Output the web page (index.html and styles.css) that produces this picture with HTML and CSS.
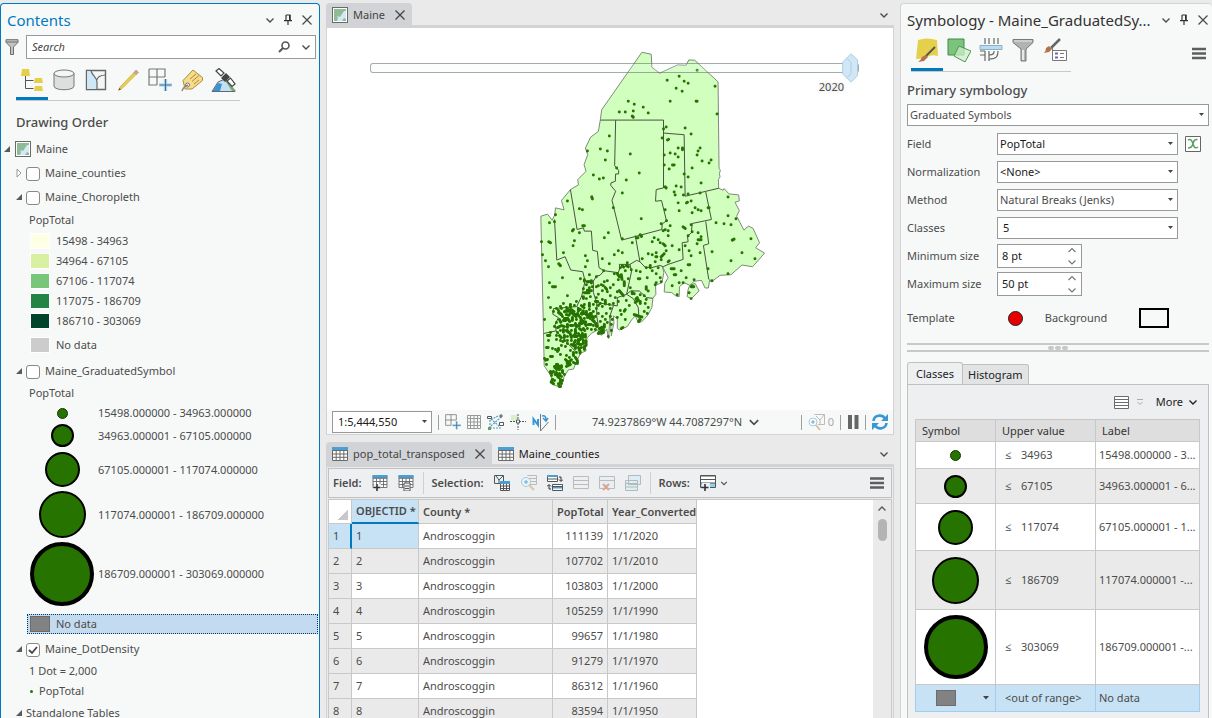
FILE: index.html
```html
<!DOCTYPE html>
<html lang="en">
<head>
<meta charset="utf-8">
<title>Maine - Population</title>
<link rel="stylesheet" href="styles.css">
</head>
<body>
<svg class="defs" width="0" height="0" aria-hidden="true">
  <symbol id="chev" viewBox="0 0 10 10"><path d="M1.500 3.500 5 7 8.500 3.500" fill="none" stroke="currentColor" stroke-width="1.400"/></symbol>
  <symbol id="pin" viewBox="0 0 10 12"><path d="M3 1h4v5.500M3 1v5.500M1 6.700h8M5 7v4" fill="none" stroke="#333" stroke-width="1.200"/><path d="M6 1h1.500v5.500H6z" fill="#333"/></symbol>
  <symbol id="close" viewBox="0 0 12 12"><path d="M1.500 1.500l9 9M10.500 1.500l-9 9" fill="none" stroke="currentColor" stroke-width="1.300"/></symbol>
  <symbol id="mapicon" viewBox="0 0 16 16"><rect x=".5" y=".5" width="15" height="15" fill="#fff" stroke="#6a6a6a"/><path d="M2 2h12v12H2z" fill="#8fbc94"/><path d="M14 4v8l-2-1-2 3H5l1-3-1-2 3 1 2-3 2-3z" fill="#d3e9f6"/></symbol>
  <symbol id="open" viewBox="0 0 8 8"><path d="M7 1v6H1z" fill="#5a5a5a"/></symbol>
  <symbol id="shut" viewBox="0 0 8 10"><path d="M2 1v8L6 5z" fill="#fff" stroke="#999"/></symbol>
  <symbol id="tbl" viewBox="0 0 16 14"><path d="M.5.500h15v13H.5z" fill="#fff" stroke="#6a6a6a"/><path d="M0 0h16v3.500H0z" fill="#4a9fd4"/><path d="M.5 3.500h15M.5 7h15M.5 10.300h15M4.200 3.500v10M8 3.500v10M11.800 3.500v10" stroke="#6a6a6a" fill="none"/></symbol>
  <symbol id="gridplus" viewBox="0 0 24 24"><path d="M1 1h16v8M1 1v16h8M9 1v16M1 9h16" fill="none" stroke="#777" stroke-width="1.200"/><path d="M17.500 11v12M11 17h13" stroke="#b5ddf5" stroke-width="3.500"/><path d="M17.500 11v12M11.500 17h12" stroke="#3f6f96" stroke-width="1.200"/></symbol>
  <symbol id="burger" viewBox="0 0 14 12"><path d="M0 1.500h14M0 6h14M0 10.500h14" stroke="#5e5e5e" stroke-width="2.600"/></symbol>
</svg>
<div class="app">

<aside class="contents">
  <header class="pane-head">
    <h1 class="pane-title blue">Contents</h1>
    <button aria-label="Options"><svg width="10" height="10"><use href="#chev"/></svg></button>
    <button aria-label="Pin"><svg width="10" height="12"><use href="#pin"/></svg></button>
    <button aria-label="Close"><svg width="12" height="12"><use href="#close"/></svg></button>
  </header>
  <div class="search-row">
    <svg width="14" height="16" viewBox="0 0 14 16"><path d="M1 .7h12v2.600L8.500 8v7.500h-3V8L1 3.300z" fill="#c3c3c3" stroke="#6f6f6f"/><path d="M1 3h12" stroke="#6f6f6f"/></svg>
    <div class="search-box">
      <input type="text" placeholder="Search" aria-label="Search">
      <button aria-label="Find"><svg width="12" height="12" viewBox="0 0 12 12"><circle cx="7.500" cy="4.500" r="3.500" fill="none" stroke="#555" stroke-width="1.600"/><path d="M5 7 1 11" stroke="#555" stroke-width="2"/></svg></button>
      <button aria-label="Search options"><svg width="10" height="10"><use href="#chev"/></svg></button>
    </div>
  </div>
  <nav class="views">
    <button class="on" aria-label="Drawing order"><svg width="24" height="24" viewBox="0 0 24 24"><path d="M2 1h7l1 7H1zM15 10h7l1 5h-9zM15 18h7l1 5h-9z" fill="#e5cf4a"/><path d="M5.500 8v12.500h8M5.500 12.500h8" fill="none" stroke="#555"/></svg></button>
    <button aria-label="Data source"><svg width="24" height="24" viewBox="0 0 24 24"><path d="M2 5v13c0 5 20 5 20 0V5" fill="#dedede" stroke="#777"/><ellipse cx="12" cy="5.500" rx="10" ry="3.500" fill="#f5f5f5" stroke="#777"/></svg></button>
    <button aria-label="Selection"><svg width="24" height="24" viewBox="0 0 24 24"><path d="M2.500 2.500h19v19h-19z" fill="#f4f5f5" stroke="#666" stroke-width="1.400"/><path d="M3 3h4l6 9v9H3z" fill="#cfe8f8"/><path d="M7 3c2 6 6 6 6 11v7M12.500 13c1-5 5-6 9-6" fill="none" stroke="#666" stroke-width="1.200"/></svg></button>
    <button aria-label="Editing"><svg width="24" height="24" viewBox="0 0 24 24"><path d="M3 22l1-3L18 4.500l2 2L6 20.500z" fill="#e7cf4f" stroke="#c9ac3c" stroke-width=".8"/><path d="M18 4.500l2-2.500 2.500 2.500-2.500 2z" fill="#e79b91" stroke="#999" stroke-width=".8"/><path d="M2 22.500l1.500-2.500 1.500 1.500z" fill="#555"/></svg></button>
    <button aria-label="Snapping"><svg width="24" height="24"><use href="#gridplus"/></svg></button>
    <button aria-label="Labeling"><svg width="24" height="24" viewBox="0 0 24 24"><path d="M3 12.500 13 2l9.500 7.500v3L12 21H5z" fill="#f5dc8a" stroke="#b08b3a"/><path d="M10 11l6-5M12 13.500l7-6M14 16l5-4" stroke="#b08b3a" fill="none"/><circle cx="7.500" cy="17" r="2" fill="#fff" stroke="#777"/><path d="M8 17c-3 1-5 3-6 6" fill="none" stroke="#888" stroke-width="1.500"/></svg></button>
    <button aria-label="Perspective imagery"><svg width="26" height="24" viewBox="0 0 26 24"><path d="M1 23.500 7 14l7-3 10 12.500z" fill="#bfe0f5" stroke="#666"/><path d="M1.500 23l5.500-8 4 1-2 7z" fill="#3c93d0"/><path d="M13 11l8 12h4l-5-6z" fill="#7aaa72"/><path d="M5 3l3-2.500 5 4.500-3 3zM16 13l3.500-3 4.500 6-3 2.500z" fill="#fff" stroke="#444" stroke-width="1.200"/><path d="M10 10l5-5 4 4-5 5z" fill="#444"/></svg></button>
  </nav>
  <h2 class="section">Drawing Order</h2>
  <ul class="tree">
    <li class="row l0"><button aria-label="Collapse"><svg width="8" height="8"><use href="#open"/></svg></button><svg width="16" height="16"><use href="#mapicon"/></svg><span>Maine</span></li>
    <li class="row l1"><button aria-label="Expand"><svg width="8" height="10"><use href="#shut"/></svg></button><input type="checkbox" id="c1"><label for="c1">Maine_counties</label></li>
    <li class="row l1"><button aria-label="Collapse"><svg width="8" height="8"><use href="#open"/></svg></button><input type="checkbox" id="c2"><label for="c2">Maine_Choropleth</label></li>
    <li class="row heading">PopTotal</li>
    <li class="row cls"><i class="swatch y1"></i>15498 - 34963</li>
    <li class="row cls"><i class="swatch y2"></i>34964 - 67105</li>
    <li class="row cls"><i class="swatch y3"></i>67106 - 117074</li>
    <li class="row cls"><i class="swatch y4"></i>117075 - 186709</li>
    <li class="row cls"><i class="swatch y5"></i>186710 - 303069</li>
    <li class="row cls nodata"><i class="swatch y6"></i>No data</li>
    <li class="row l1"><button aria-label="Collapse"><svg width="8" height="8"><use href="#open"/></svg></button><input type="checkbox" id="c3"><label for="c3">Maine_GraduatedSymbol</label></li>
    <li class="row heading low">PopTotal</li>
    <li class="row sym"><span class="slot"><i class="dot d1"></i></span>15498.000000 - 34963.000000</li>
    <li class="row sym"><span class="slot"><i class="dot d2"></i></span>34963.000001 - 67105.000000</li>
    <li class="row sym"><span class="slot"><i class="dot d3"></i></span>67105.000001 - 117074.000000</li>
    <li class="row sym"><span class="slot"><i class="dot d4"></i></span>117074.000001 - 186709.000000</li>
    <li class="row sym"><span class="slot"><i class="dot d5"></i></span>186709.000001 - 303069.000000</li>
    <li class="row chosen"><i class="grey"></i>No data</li>
    <li class="row l1"><button aria-label="Collapse"><svg width="8" height="8"><use href="#open"/></svg></button><input type="checkbox" id="c4" checked><label for="c4">Maine_DotDensity</label></li>
    <li class="row heading low">1 Dot = 2,000</li>
    <li class="row heading low"><i class="speck"></i>PopTotal</li>
    <li class="row l1"><button aria-label="Collapse"><svg width="8" height="8"><use href="#open"/></svg></button><span>Standalone Tables</span></li>
  </ul>
</aside>

<main class="centre">
  <section class="mapview">
    <div class="tabs">
      <div class="tab active"><svg width="16" height="16"><use href="#mapicon"/></svg><span>Maine</span><button aria-label="Close Maine"><svg width="12" height="12"><use href="#close"/></svg></button></div>
      <button class="more" aria-label="Tab list"><svg width="10" height="10"><use href="#chev"/></svg></button>
    </div>
    <div class="map">
      <svg class="state" viewBox="0 0 566 383" aria-label="Map of Maine">
        <g transform="translate(203 12) scale(.33333)" fill="none" stroke="#66755f" stroke-width="3" stroke-linejoin="round">
          <path fill="#d1ffbe" stroke="#808a7a" d="M336 37 364 43 366 82 389 100 443 75 469 76 477 60 495 61 565 126 568 386 572 392 569 402 571 412 566 420 567 446 580 452 583 447 598 463 627 466 629 484 616 488 629 513 621 530 643 572 656 560 670 566 690 610 678 625 705 641 669 682 637 677 604 706 571 708 544 728 540 720 536 746 526 746 515 723 493 726 480 738 463 730 449 742 448 772 438 770 426 760 403 758 405 732 415 715 403 692 398 682 402 700 396 730 377 738 378 765 369 777 366 805 352 830 335 848 325 850 316 830 305 842 292 862 268 872 262 868 262 838 250 830 252 850 244 890 240 830 236 898 230 870 215 888 206 884 204 872 185 882 172 895 165 915 168 935 152 942 140 965 130 990 115 992 103 1010 92 1046 68 1036 62 1010 42 980 40 880 32 530 52 524 66 542 74 526 76 505 102 511 94 483 121 450 145 436 143 420 168 395 162 375 173 345 166 325 182 292 205 275 211 240 215 210Z"/>
          <path fill="#d1ffbe" stroke="#808a7a" d="M480 738 496 732 508 755 485 778 472 772 475 750Z"/>
          <path stroke="#47523f" d="M211 241H401V445L379 450 377 485 395 483 410 544 397 553 396 570 275 602 246 482 257 455 242 437 243 430 256 425 257 403 266 403 266 392 254 378 257 241M401 280 463 285 466 470 567 446M528 457 545 540 487 552 485 580 473 590 475 607 457 610 460 660 415 675 400 682M528 546 537 613 521 618 537 720M121 450 141 570 160 565 163 575 184 575 188 633 202 636 207 685 222 694 265 700 270 685 268 675 300 675 320 663 330 667 316 588M330 667 345 683 365 685 390 678 400 682M73 540 80 662 105 652 122 692 158 697 165 725 190 725 200 710 210 708 222 694M165 725 155 770 140 802 70 808 68 825 85 835 75 855 78 875 40 883M190 725 190 760 200 790 262 800 262 775 290 765 305 695 300 675M290 765 302 755 328 755 350 775 369 777M290 765 310 778 325 805 328 845M200 790 200 830 205 860M240 830 250 800M140 802 180 840 200 860M78 875 110 910 140 940"/>
        </g>
        <g transform="translate(203 12) scale(.33333)" fill="none" stroke="#267300" stroke-width="9" stroke-linecap="round">
          <path d="M502 91h0M448 109h0M412 121h0M463 124h0M475 130h0M556 139h0M439 145h0M457 154h0M421 184h0M499 184h3M295 184h0M313 193h0M340 202h0M268 217h0M286 217h0M310 214h0M355 220h0M307 229l3 3M562 223h0M409 262h0M401 268h0M466 265h0M484 283h0M397 295h0M413 301l3-2M238 289h0M211 328h0M232 334h0M172 334h0M226 361h0M301 343h0M445 325h0M458 325v5M511 325h0M505 334h0M502 346h0M421 340h0M436 343h0M403 346h0M445 352h0M517 364h0M544 361h0M538 370h0M403 376h0M428 376h5M418 388h0M487 385h0M463 403h0M475 412h0M328 400h0M289 421h0M260 385h0M190 406h0M208 418h0M220 415h0M514 430h0M439 439h0M454 442h0M406 442l3 3M433 457h0M436 466h0M475 463h0M461 466h0M511 460h0M277 460h0M595 472h0M185 472l2 6M112 484h0M148 508h0M157 511h0M76 526h0M445 490h0M470 490l3-2M484 484h0M406 511h0M448 514h0M487 520h0M496 505h0M505 511h0M514 514h0M535 505h3M250 505h0"/>
          <g transform="translate(0 480)">
            <path d="M595 49h0M334 58h0M619 58h0M559 70h0M583 73h0M604 76h0M608 122l5-3M664 118h0M547 157h0M637 160h0M604 184h0M676 178h0M595 223h0M58 70h0M73 67h0M130 90l-3 4M158 79h5M148 100h0M133 124h0M129 139h0M100 160h0M34 127h0M56 127l5 3M37 166h0M46 184h0M55 202h0M86 193l5 6M97 235h0M58 250h0M67 262h9M112 289h0M55 295h0M151 238h0M166 169h0M172 184h0M166 202h0M235 100h0M223 115h0M277 118h0M307 130h0M319 115h5M331 106l4 5M265 154h0M277 160h0M253 166h0M217 178h0M238 193h0M221 214h0M178 226h0M199 232h0M337 178h0M373 115h0M385 121h0M367 127h0M391 130h0M400 133l6 6M406 91h0M400 94h0M394 73h0M410 64h0M421 79h0M415 94h0M415 109h0M427 139h0M448 151h0M466 139h0M478 154h0M355 163h0M367 166h0M378 172h3M379 160h0M409 154h0M400 166l-6 6M403 163h0M394 181h0M415 187l3-3M460 82l6 5M484 76h0M487 97h0M475 109h0M505 100h0M505 121h9M514 112h0M502 133h0M511 160h0M475 196h5M484 169h0M424 208h9M454 214h0M433 226h5M427 259h0M460 250h0M448 250h0M469 235h0M493 241h0M488 260h0M478 280h0M484 298h0M484 262h8M442 286h0M535 208h0M547 244h0"/>
            <path d="M361 198v7M349 205h0M385 205h0M367 214h0M376 187h0M379 223h0M391 235h0M394 247h0M379 250h0M376 256h0M352 235h0M325 238h5M331 217h0M319 214h0M304 211h0M289 199l6 3M277 199l4 4M292 190h0M286 214h0M271 205h0M262 223l6 9M274 226l2 14M265 241h0M253 223h0M250 256h0M283 247v12M295 238h0M349 262v8M355 275h0M343 289h0M349 301h0M331 286h0M346 313h0M355 325h0M343 337h0M322 295l-4 4M325 301l-4 5M316 310h0M331 307v6M307 278v5M313 283h0M301 265h0M280 289h0M268 274l10 12M262 277h0M256 295h0M241 289h0M232 277h0M226 265l4 5M220 259h0M217 274h0M214 256h0M205 259h0M232 244h0M223 247h0M241 265h0M265 307h0M289 304h0M298 319h0M286 331l-3 5M271 334h0M274 346h0M286 361h0M313 346l10 3M322 350l14 3M331 361l-5 6M352 343h0M250 313h0M238 316h0M241 328h0M226 304v10M217 301h0M211 313h0M199 295h0M196 307h7M205 319h0M217 322h0M229 343v0M241 352h0M247 361h0M226 361h0M217 352h0M205 343h0M211 367h0M202 382h0M223 376v8M214 394v8M235 412h0M244 394h0M262 355h0M274 388l5-3M244 376h0"/>
            <path d="M163 241v5M172 247h5M184 244v7M169 256h0M187 262h0M160 268h0M178 265h0M163 280h14M172 273h6M199 262h0M205 285h0M184 274h0M160 292v6M169 298h0M181 292h0M178 312v10M190 316h0M199 328h0M154 319l8 6M163 316h0M145 328v8M151 331h0M139 307h0M133 319h0M121 316v8M109 325h0M100 313h0M91 322h0M94 328h0M79 328h0M70 337h0M61 325h0M85 334h0M88 340l6 6M103 337l12-6M124 331l8 6M121 343h0M97 352h0M109 346l8 2M130 346h8M142 343l5 8M154 343h8M169 337v9M178 331h0M181 343v9M190 337h0M196 352h0M187 361l6 6M172 355h0M163 358h0M151 355l4 8M139 361h0M127 355v9M115 361l4 6M100 364h7M88 361l4 8M79 370h0M73 382h0M82 385l6-3M94 379l9 3M112 376v9M121 379h7M136 373l3 10M148 373h8M163 370l5 9M175 376h8M190 379h0M199 373v8M184 391h0M172 388h0M160 388l4 6M148 388l6 5M136 391v8M124 394h0M112 394l3 5M100 391v8M91 394h0M82 400h0M79 409h0M88 409l5 6M103 409v6M112 412h0M121 406l3 9M133 412h8M145 403l6 9M157 403v9M166 406v8M160 424v9M154 436h0M145 421v9M136 424l-4 8M124 424h0M112 424h0M103 424l-5 3M91 424h0M79 421h0M94 439h0M112 433h0M106 442h0M124 436l8 4M136 439v9M145 445l4 9M154 445h0M163 442v9M43 361h0M52 409h7M61 400h0M55 424h0M49 445h5M67 448h0M76 451h0M85 448v5M91 466h0M61 472h6M52 481l-6 2M43 478h0M49 496h0M82 457h0"/>
            <path d="M150 457v5M139 460h0M130 460v9M121 454h0M109 469h0M106 481l6 6M118 475h0M118 487l6-5M121 496l-8 4M136 475l6 9M142 487v6M130 490h0M136 493h0M109 502h0M79 496h0M73 502l6 3M82 496l4 6M94 500v5M88 508v4M79 511h0M70 517l-6 5M79 520l-4 6M88 523v6M97 514v6M103 526h0M94 532v0M85 535l-4-6M67 541l-4 8M73 544h0M64 529h0M70 554l-4-3M91 541v8M97 544h0M94 553h0M91 562h0M88 562l-3-8M82 526l8 1M61 517v5M111 493h8M82 510l-8-5M196 391h0M205 403l4-5M220 391v10M232 370h0M208 388l9-4M93 346l-8-6M103 358h10M126 340l12 12M160 335l-5 10M170 345l10 12M138 402l-8 8M168 425v14M158 415l-8 6M120 402l-12-8M148 380l-12-2M174 348l10-6M108 336l12 0M142 433l8 3M152 365l15 3M186 350l4 6"/>
          </g>
        </g>
      </svg>
      <div class="time">
        <input type="range" min="1900" max="2020" value="2020" aria-label="Year">
        <output>2020</output>
      </div>
    </div>
    <footer class="status">
      <select class="combo scale" aria-label="Scale"><option>1:5,444,550</option></select>
      <i class="vr"></i>
      <button aria-label="Snap"><svg width="16" height="16"><use href="#gridplus"/></svg></button>
      <button aria-label="Grid"><svg width="14" height="14" viewBox="0 0 14 14"><path d="M.5.500h13v13H.5zM.5 3.500h13M.5 7h13M.5 10.500h13M3.500.5v13M7 .5v13M10.500.5v13" fill="none" stroke="#999"/></svg></button>
      <button aria-label="Dynamic constraints"><svg width="17" height="16" viewBox="0 0 17 16"><path d="M3 14V6l8-4M3 14h11M4 12 14 3M4 5l9 8" fill="none" stroke="#5a9bc4" stroke-width="1.200" stroke-dasharray="2 1"/><path d="M.5 2.500h4v2h-4zM12.500 8.500h4v3h-4z" fill="#fff" stroke="#555"/><path d="M1 13h3v3H1z" fill="#63a163"/><path d="M12 2h4M14 0v4" stroke="#555"/></svg></button>
      <button aria-label="Inference"><svg width="16" height="16" viewBox="0 0 16 16"><path d="M1 1h7v6H1z" fill="#d9efcf"/><path d="M8 0v16M0 7.500h16" stroke="#555" stroke-dasharray="2 1"/><path d="M6.500 6h3v3h-3z" fill="#fff" stroke="#555"/></svg></button>
      <button aria-label="Correct to north"><svg width="17" height="17" viewBox="0 0 17 17"><path d="M1.500 11V5l4.500 6V5" fill="none" stroke="#3b97d3" stroke-width="2"/><path d="M8.500 0v17l8-9" fill="none" stroke="#777"/><path d="M10 2c3-1 4 1 4 4M11 4l3 3 2-3" fill="none" stroke="#3b97d3" stroke-width="1.500"/></svg></button>
      <i class="vr"></i>
      <span class="coords">74.9237869°W 44.7087297°N</span>
      <button aria-label="Coordinate units"><svg width="12" height="12"><use href="#chev"/></svg></button>
      <span class="push"></span>
      <i class="vr"></i>
      <button class="count" aria-label="Selected features"><svg width="17" height="17" viewBox="0 0 17 17"><path d="M6.500.5h10v10H10M8 2l4 4v4M12 6l4-5" fill="none" stroke="#bbb"/><circle cx="5" cy="8" r="4" fill="#fff" stroke="#a5cbe3"/><path d="M3 8h4M5 6v4" stroke="#6aabd6"/><path d="M8 11l4 5" stroke="#dfc09e" stroke-width="2"/></svg><span>0</span></button>
      <i class="vr"></i>
      <button aria-label="Pause drawing"><svg width="12" height="14" viewBox="0 0 12 14"><path d="M1 0h4v14H1zM7.500 0h4v14h-4z" fill="#666"/></svg></button>
      <i class="vr"></i>
      <button aria-label="Refresh"><svg width="16" height="16" viewBox="0 0 16 16"><path d="M1.500 7C2 1 10 0 13 4.500M14.500 9C14 15 6 16 3 11.500" fill="none" stroke="#3b97d3" stroke-width="2.600"/><path d="M16 0v7H9zM0 16V9h7z" fill="#3b97d3"/></svg></button>
    </footer>
  </section>

  <section class="tableview">
    <div class="tabs">
      <div class="tab active"><svg width="16" height="14"><use href="#tbl"/></svg><span>pop_total_transposed</span><button aria-label="Close table"><svg width="12" height="12"><use href="#close"/></svg></button></div>
      <div class="tab"><svg width="16" height="14"><use href="#tbl"/></svg><span>Maine_counties</span></div>
      <button class="more" aria-label="Tab list"><svg width="10" height="10"><use href="#chev"/></svg></button>
    </div>
    <div class="tableframe">
      <div class="tools">
        <b>Field:</b>
        <button aria-label="Add field"><svg width="16" height="16" viewBox="0 0 16 16"><use href="#tbl" width="16" height="13"/><path d="M2 9h7v7H2z" fill="#eeeff1"/><path d="M5 9v7M1.500 12.500h7" stroke="#333" stroke-width="1.600"/></svg></button>
        <button aria-label="Calculate field"><svg width="16" height="16" viewBox="0 0 16 16"><use href="#tbl" width="16" height="13"/><path d="M6 8h6v8H6z" fill="#eeeff1" stroke="#555"/><path d="M7 11h4M7 13.500h4" stroke="#555"/></svg></button>
        <i class="vr light"></i>
        <b>Selection:</b>
        <button aria-label="Select by attributes"><svg width="16" height="16" viewBox="0 0 16 16"><path d="M.5.500h9v8h-9zM2 1l3 4v3M5 5l4-4" fill="#e2f2fb" stroke="#555"/><path d="M6.500 6.500h9v9h-9z" fill="#fff" stroke="#555"/><path d="M6 6h10v3H6z" fill="#4a9fd4"/><path d="M7 11h9M7 13.500h9M9.500 9v7M12.500 9v7" stroke="#555"/></svg></button>
        <button aria-label="Zoom to selection"><svg width="17" height="16" viewBox="0 0 17 16"><path d="M7.500.5h9v9h-7M8 3.500h8M10 6.500h6" fill="none" stroke="#bbb"/><circle cx="6" cy="7" r="4.500" fill="#e9f3fa" stroke="#a9cbe0"/><path d="M4 7h4M6 5v4" stroke="#6aabd6"/><path d="M9 10l5 5" stroke="#dfc3aa" stroke-width="2"/></svg></button>
        <button aria-label="Switch selection"><svg width="16" height="16" viewBox="0 0 16 16"><path d="M.5.500h10v6H.5zM5.500 9.500h10v6h-10z" fill="#fff" stroke="#555"/><path d="M0 0h11v2H0zM6 12h9v1.500H6z" fill="#4a9fd4"/><path d="M1 4h10M6 11.500h10" stroke="#555"/><path d="M12 2h2v4M12 4.500l2 2 2-2M4 14H2v-4M0 11.500l2-2 2 2" fill="none" stroke="#333"/></svg></button>
        <button aria-label="Clear selection"><svg width="16" height="14" viewBox="0 0 16 14"><path d="M.5.500h15v12H.5zM.5 4.500h15M.5 8.500h15" fill="none" stroke="#bbb"/></svg></button>
        <button aria-label="Delete selection"><svg width="16" height="16" viewBox="0 0 16 16"><path d="M.5 1.500h15v12H.5zM.5 5.500h15" fill="#e6eff3" stroke="#bbb"/><path d="M4 9l6 6M10 9l-6 6" stroke="#dda58f" stroke-width="2"/></svg></button>
        <button aria-label="Copy selection"><svg width="16" height="16" viewBox="0 0 16 16"><path d="M3.500.5h12v9h-12zM.5 5.500h12v10H.5zM.5 8.500h12M.5 12h12" fill="#dceef5" stroke="#b5b9bb"/></svg></button>
        <i class="vr light"></i>
        <b>Rows:</b>
        <button aria-label="Add row"><svg width="16" height="16" viewBox="0 0 16 16"><path d="M.5.500h15v12H.5z" fill="#fff" stroke="#555"/><path d="M1 8h14v4H1z" fill="#8fd3ee"/><path d="M0 1h16M.5 4.500h15M.5 8h15" stroke="#555"/><path d="M2 8h8v8H2z" fill="#eeeff1"/><path d="M5 9v7M1.500 12.500h7" stroke="#333" stroke-width="1.600"/></svg></button>
        <button class="tight" aria-label="Row options"><svg width="8" height="8"><use href="#chev"/></svg></button>
        <span class="push"></span>
        <button aria-label="Menu"><svg width="14" height="12"><use href="#burger"/></svg></button>
      </div>
      <div class="gridwrap">
        <div class="gridscroll">
        <table class="data">
          <colgroup><col class="w0"><col class="w1"><col class="w2"><col class="w3"><col class="w4"></colgroup>
          <thead><tr><th class="corner"></th><th class="picked">OBJECTID *</th><th>County *</th><th class="num">PopTotal</th><th>Year_Converted</th></tr></thead>
          <tbody>
            <tr class="current"><th>1</th><td>1</td><td>Androscoggin</td><td class="num">111139</td><td>1/1/2020</td></tr>
            <tr><th>2</th><td>2</td><td>Androscoggin</td><td class="num">107702</td><td>1/1/2010</td></tr>
            <tr><th>3</th><td>3</td><td>Androscoggin</td><td class="num">103803</td><td>1/1/2000</td></tr>
            <tr><th>4</th><td>4</td><td>Androscoggin</td><td class="num">105259</td><td>1/1/1990</td></tr>
            <tr><th>5</th><td>5</td><td>Androscoggin</td><td class="num">99657</td><td>1/1/1980</td></tr>
            <tr><th>6</th><td>6</td><td>Androscoggin</td><td class="num">91279</td><td>1/1/1970</td></tr>
            <tr><th>7</th><td>7</td><td>Androscoggin</td><td class="num">86312</td><td>1/1/1960</td></tr>
            <tr><th>8</th><td>8</td><td>Androscoggin</td><td class="num">83594</td><td>1/1/1950</td></tr>
          </tbody>
        </table>
        </div>
        <div class="scroll"><svg width="10" height="10" viewBox="0 0 10 10"><path d="M1.500 6.500 5 3l3.500 3.500" fill="none" stroke="#555" stroke-width="1.300"/></svg><i></i></div>
      </div>
    </div>
  </section>
</main>

<aside class="symbology">
  <header class="pane-head">
    <h1 class="pane-title">Symbology - Maine_GraduatedSy...</h1>
    <button aria-label="Options"><svg width="10" height="10"><use href="#chev"/></svg></button>
    <button aria-label="Pin"><svg width="10" height="12"><use href="#pin"/></svg></button>
    <button aria-label="Close"><svg width="12" height="12"><use href="#close"/></svg></button>
  </header>
  <div class="symtools">
    <nav class="views">
      <button class="on" aria-label="Primary symbology"><svg width="24" height="24" viewBox="0 0 24 24"><path d="M3 2q9-3 19 0l1 16q-8-2-12 2L1 21z" fill="#e5d04c"/><path d="M20 9 10 19" stroke="#555" stroke-width="2"/><path d="M11 17l2 2-4 4-6 1q3-2 4-5z" fill="#b5714a"/></svg></button>
      <button aria-label="Vary symbology"><svg width="24" height="24" viewBox="0 0 24 24"><path d="M1 1h16v16H1z" fill="#7cc47e" stroke="#3f8a43"/><path d="M12 8l12 5-6 11-11-6z" fill="#cdeccb" fill-opacity=".75" stroke="#4d9650"/></svg></button>
      <button aria-label="Symbol layers"><svg width="24" height="24" viewBox="0 0 24 24"><path d="M6 0v6M10 0v6M15 0v6M19 0v6M6 13v10M10 13v10M1 13h5M1 17h5M10 17c5 0 5-2 5-4M10 21c8 0 9-3 9-8" fill="none" stroke="#666" stroke-width="1.200"/><path d="M1 7.500h22v4H1z" fill="#b8dcf2" stroke="#8fb0c2"/></svg></button>
      <button aria-label="Display filters"><svg width="24" height="24" viewBox="0 0 24 24"><path d="M2 1.500h20v3L15 11v12h-5V11L2 4.500z" fill="#b0b2b4" stroke="#777"/><path d="M3 3h18" stroke="#e8e8e8"/><path d="M12 12v10" stroke="#e8e8e8" stroke-width="2"/></svg></button>
      <button aria-label="Advanced options"><svg width="24" height="24" viewBox="0 0 24 24"><path d="M17 1 8 10" stroke="#666" stroke-width="2.500"/><path d="M6 8l3 3-3 3-5 1q2-2 2-5z" fill="#b5714a"/><path d="M9.500 12.500h14v10h-14V10z" fill="#fff" stroke="#777"/><path d="M12 15.500h3M12 19.500h3" stroke="#775fb0" stroke-width="2"/><path d="M17 15.500h4M17 19.500h4" stroke="#777"/></svg></button>
    </nav>
    <button aria-label="Menu"><svg width="14" height="13"><use href="#burger"/></svg></button>
  </div>
  <h2 class="section">Primary symbology</h2>
  <select class="combo wide" aria-label="Primary symbology type"><option>Graduated Symbols</option></select>
  <div class="form">
    <label for="f1">Field</label><div class="ctl"><select id="f1" class="combo dark"><option>PopTotal</option></select><button aria-label="Set expression"><svg width="16" height="16" viewBox="0 0 16 16"><path d="M.5.500h15v15H.5z" fill="#fff" stroke="#666"/><path d="M3 4c3-1.500 4 1 5 4s2 5 5 3M12.500 3.500C9 3 9 5 8 8s-2 4-5 4" fill="none" stroke="#58a05c" stroke-width="1.500"/></svg></button></div>
    <label for="f2">Normalization</label><div class="ctl"><select id="f2" class="combo dark"><option>&lt;None&gt;</option></select></div>
    <label for="f3">Method</label><div class="ctl"><select id="f3" class="combo"><option>Natural Breaks (Jenks)</option></select></div>
    <label for="f4">Classes</label><div class="ctl"><select id="f4" class="combo dark inset"><option>5</option></select></div>
    <label for="f5">Minimum size</label><div class="ctl"><span class="spin"><input type="text" id="f5" value="8 pt"><span><button aria-label="Increase"><svg width="10" height="7" viewBox="0 0 10 7"><path d="M1.500 5 5 1.500 8.500 5" fill="none" stroke="#777" stroke-width="1.200"/></svg></button><button aria-label="Decrease"><svg width="10" height="7" viewBox="0 0 10 7"><path d="M1.500 1.500 5 5 8.500 1.500" fill="none" stroke="#777" stroke-width="1.200"/></svg></button></span></span></div>
    <label for="f6">Maximum size</label><div class="ctl"><span class="spin"><input type="text" id="f6" value="50 pt"><span><button aria-label="Increase"><svg width="10" height="7" viewBox="0 0 10 7"><path d="M1.500 5 5 1.500 8.500 5" fill="none" stroke="#777" stroke-width="1.200"/></svg></button><button aria-label="Decrease"><svg width="10" height="7" viewBox="0 0 10 7"><path d="M1.500 1.500 5 5 8.500 1.500" fill="none" stroke="#777" stroke-width="1.200"/></svg></button></span></span></div>
  </div>
  <div class="template"><label for="tp">Template</label><button id="tp" class="red" aria-label="Template symbol"></button><label for="bg">Background</label><button id="bg" class="box" aria-label="Background symbol"></button></div>
  <div class="splitter"><i></i><i></i><i></i></div>
  <div class="subtabs"><button class="on">Classes</button><button>Histogram</button></div>
  <section class="classes">
    <div class="classbar">
      <svg width="15" height="13" viewBox="0 0 15 13"><path d="M.5.500h14v12H.5zM.5 3.500h14M.5 6.500h14M.5 9.500h14" fill="#fff" stroke="#6b6b6b"/></svg>
      <svg width="6" height="8" viewBox="0 0 6 8"><path d="M0 1.500h6M.5 4 3 6.500 5.500 4" fill="none" stroke="#aaa"/></svg>
      <button>More <svg width="10" height="10"><use href="#chev"/></svg></button>
    </div>
    <table class="breaks">
      <colgroup><col class="b1"><col class="b2"><col></colgroup>
      <thead><tr><th>Symbol</th><th>Upper value</th><th>Label</th></tr></thead>
      <tbody>
        <tr class="h1"><td><i class="dot d1"></i></td><td><span>≤</span>34963</td><td>15498.000000 - 3...</td></tr>
        <tr class="h2"><td><i class="dot d2"></i></td><td><span>≤</span>67105</td><td>34963.000001 - 6...</td></tr>
        <tr class="h3"><td><i class="dot d3"></i></td><td><span>≤</span>117074</td><td>67105.000001 - 1...</td></tr>
        <tr class="h4"><td><i class="dot d4"></i></td><td><span>≤</span>186709</td><td>117074.000001 -...</td></tr>
        <tr class="h5"><td><i class="dot d5"></i></td><td><span>≤</span>303069</td><td>186709.000001 -...</td></tr>
        <tr class="out"><td><div class="pick"><i class="grey"></i><svg width="6" height="4" viewBox="0 0 6 4"><path d="M0 0h6L3 3.500z" fill="#444"/></svg></div></td><td>&lt;out of range&gt;</td><td>No data</td></tr>
      </tbody>
    </table>
  </section>
</aside>
</div>
</body>
</html>
```
FILE: styles.css
```css
* { box-sizing: border-box; }
body {
  margin: 0;
  background: #eaeaea;
  color: #4c4c4c;
  font: 11px/16px "Noto Sans", "Open Sans", sans-serif;
}
.defs { position: absolute; }
svg { display: block; flex: none; }
button {
  display: flex;
  align-items: center;
  padding: 0;
  border: 0;
  background: none;
  color: inherit;
  font: inherit;
}
input, select { font: inherit; color: inherit; }
.app {
  display: grid;
  grid-template-columns: 320px minmax(0, 1fr) 312px;
  gap: 6px;
  height: 100vh;
  padding-top: 3px;
  overflow: hidden;
}
.push { flex: 1; }

/* Panes */
.contents, .symbology {
  background: #f7f9f8;
  border: 1px solid #d2d4d4;
  border-bottom: 0;
  border-radius: 4px 4px 0 0;
  overflow: hidden;
}
.contents { border-color: #0079c1; }
.symbology { border-right: 0; padding: 0 3px 0 6px; display: flex; flex-direction: column; }
.pane-head {
  display: flex;
  align-items: center;
  gap: 8px;
  height: 31px;
  padding: 0 6px;
}
.symbology .pane-head { padding: 0; }
.pane-title {
  flex: 1;
  min-width: 0;
  margin: 0;
  color: #333;
  font-size: 15px;
  font-weight: 400;
  line-height: 20px;
  white-space: nowrap;
}
.pane-title.blue { color: #0079c1; }
.section { margin: 0; font-size: 13px; font-weight: 500; line-height: 20px; }

.search-row { display: flex; align-items: center; gap: 7px; padding: 0 3px 0 4px; }
.search-box {
  display: flex;
  align-items: center;
  gap: 11px;
  flex: 1;
  height: 24px;
  padding: 0 4px 0 5px;
  border: 1px solid #999;
  background: #fff;
}
.search-box input { flex: 1; min-width: 0; padding: 0; border: 0; outline: 0; background: none; font-style: italic; }
.search-box input::placeholder { color: #444; opacity: 1; }

.views { display: flex; }
.contents .views { width: 224px; margin: 5px 0 0 15px; border-bottom: 1px solid #c8c8c8; }
.views button { width: 32px; height: 36px; justify-content: center; padding-bottom: 3px; border-bottom: 3px solid transparent; }
.contents .views button { padding-bottom: 1px; }
.views .on { border-bottom-color: #0079c1; }
.contents .section { margin: 11px 0 0 15px; }

/* Layer tree */
.tree { margin: 5px 0 0; padding: 0; list-style: none; }
.row { display: flex; align-items: center; height: 20px; white-space: nowrap; }
.l0, .l1 { height: 24px; }
.l0 { padding-left: 2px; gap: 4px; }
.l0 span { padding-left: 1px; }
.l1 { padding-left: 14px; gap: 3px; }
.l1 label { padding-left: 2px; }
.tree input {
  appearance: none;
  width: 14px;
  height: 14px;
  margin: 2px 0 0;
  border: 1px solid #888;
  border-radius: 3px;
  background: #fff center / 12px no-repeat;
}
.tree input:checked {
  background-image: url("data:image/svg+xml,%3Csvg xmlns='http://www.w3.org/2000/svg' viewBox='0 0 12 12'%3E%3Cpath d='M2 6l3 3 5-6' fill='none' stroke='%23444' stroke-width='1.800'/%3E%3C/svg%3E");
}
.heading { height: 22px; padding-left: 28px; }
.low { height: 20px; }
.cls { padding-left: 29px; gap: 6px; }
.nodata { height: 28px; }
.swatch { width: 20px; height: 16px; border: 1px solid #fff; }
.y1 { background: #ffffe5; }
.y2 { background: #d9f0a3; }
.y3 { background: #78c679; }
.y4 { background: #238443; }
.y5 { background: #004529; }
.y6 { background: #ccc; }
.sym { height: auto; padding: 0 0 1px 29px; gap: 4px; }
.slot { display: flex; justify-content: center; width: 64px; padding: 3px 0; }
.slot:has(.d1) { padding: 5px 0 4px; }
.slot:has(.d2) { padding: 0 0 1px; }
.slot:has(.d4) { padding: 0; }
.dot { flex: none; display: block; border: 2px solid #000; border-radius: 50%; background: #267300; }
.d1 { width: 11px; height: 11px; border: 1px solid #143c00; }
.d2 { width: 23px; height: 23px; }
.d3 { width: 35px; height: 35px; }
.d4 { width: 47px; height: 47px; }
.d5 { width: 64px; height: 64px; border-width: 4px; }
.chosen { height: 20px; margin: 4px 1px 3px 26px; padding-left: 2px; gap: 6px; border: 1px dotted #003a66; background: #c4daee; }
.grey { width: 20px; height: 16px; border: 1px solid #6c6c6c; background: #828282; }
.speck { width: 3px; height: 3px; margin: 0 6px 0 1px; border-radius: 50%; background: #267300; }

/* Centre */
.centre { display: grid; grid-template-rows: 432px minmax(0, 1fr); gap: 7px; min-width: 0; }
.mapview, .tableview { display: flex; flex-direction: column; min-width: 0; min-height: 0; }
.tabs { display: flex; border-bottom: 3px solid #d1d3d6; }
.tab { display: flex; align-items: center; gap: 5px; height: 22px; padding: 2px 6px 0; color: #1a1a1a; }
.tab.active { border-radius: 4px 4px 0 0; background: #d1d3d6; color: #444; }
.tab.active button { margin-left: 4px; }
.tabs .more { margin-left: auto; padding: 2px 5px 0 0; }
.map { position: relative; flex: 1; min-height: 0; border: 1px solid #d1d3d6; border-width: 0 1px; background: #fff; }
.state { width: 100%; height: 100%; }
.time { position: absolute; top: 26px; right: 34px; left: 43px; }
.time input { display: block; appearance: none; width: 100%; height: 28px; margin: 0; background: none; }
.time input::-webkit-slider-runnable-track { height: 10px; border: 1px solid rgb(80 90 85 / .5); border-radius: 3px; background: rgb(240 250 250 / .2); }
.time input::-webkit-slider-thumb {
  appearance: none;
  width: 16px;
  height: 30px;
  margin-top: -11px;
  background: url("data:image/svg+xml,%3Csvg xmlns='http://www.w3.org/2000/svg' viewBox='0 0 16 30'%3E%3Cpath d='M9 .8l6.500 6v16L9 29.200.7 21V9z' fill='%23d2e7f5' stroke='%23a9cde2'/%3E%3Cpath d='M5 5.500l4 4v11l-4 4' fill='none' stroke='%23a9cde2'/%3E%3C/svg%3E");
}
.time output { display: block; margin: -3px 15px 0 0; text-align: right; text-shadow: 0 0 4px #ccc; }
.status {
  display: flex;
  align-items: center;
  gap: 6px;
  height: 25px;
  padding: 0 5px;
  border: 1px solid #d1d3d6;
  border-top: 0;
  background: #f7f9f8;
}
.vr { flex: none; width: 1px; height: 15px; background: #a0a0a0; }
.vr.light { height: 22px; background: #cfcfcf; }
.coords { margin-left: 30px; white-space: nowrap; }
.count { gap: 3px; color: #aaa; }

.combo {
  appearance: none;
  flex: none;
  width: 181px;
  height: 22px;
  padding: 0 14px 0 2px;
  border: 1px solid #999;
  border-radius: 0;
  background: #fff url("data:image/svg+xml,%3Csvg xmlns='http://www.w3.org/2000/svg' viewBox='0 0 6 4'%3E%3Cpath d='M0 0h5L2.500 3z' fill='%23444'/%3E%3C/svg%3E") right 3px center / 6px 4px no-repeat;
}
.dark { color: #1a1a1a; }
.inset { padding-left: 5px; }
.scale { width: 100px; padding-left: 5px; color: #1a1a1a; }

/* Attribute table */
.tableframe { display: flex; flex-direction: column; flex: 1; min-height: 0; gap: 1px; padding: 1px 1px 0; border: 1px solid #d1d3d6; border-width: 0 1px; }
.tools { display: flex; align-items: center; gap: 10px; height: 30px; flex: none; padding: 0 7px 0 4px; border: 1px solid #c0c3c6; background: #eeeff1; }
.tools b, .data th { font-weight: 600; }
.tools .vr { margin: 0 -2px 0 -1px; }
.tools .tight { margin-left: -6px; }
.gridwrap { display: flex; flex: 1; min-height: 0; justify-content: space-between; border: 1px solid #c8c8c8; border-bottom: 0; background: #fff; }
.gridscroll { overflow: hidden; }
.data { border-collapse: separate; border-spacing: 0; table-layout: fixed; width: 368px; }
.w0 { width: 23px; }
.w1 { width: 67px; }
.w2 { width: 134px; }
.w3 { width: 55px; }
.w4 { width: 89px; }
.data th, .data td { height: 25px; padding: 0 4px; border: solid #c8c8c8; border-width: 0 1px 1px 0; text-align: left; white-space: nowrap; }
.data thead th { height: 24px; background: #eaeaea; }
.data thead th:last-child { padding-right: 0; }
.data thead th.corner { background: linear-gradient(135deg, #fff 50%, #c8c8c8 50%) right 3px bottom 3px / 10px 10px no-repeat #fff; }
.data thead th.picked { border-bottom: 2px solid #0079c1; background: #c7e2f5; }
.data tbody th { background: #eaeaea; font-weight: 400; }
.data tbody tr:nth-child(even) td { background: #eaeaea; }
.data tbody .current th, .data tbody .current td:nth-child(2) { background: #c7e2f5; }
.data tbody .current th { border-right: 2px solid #0079c1; }
.data .num { text-align: right; }
.scroll { display: flex; flex-direction: column; align-items: center; gap: 5px; width: 18px; padding: 4px 0; background: #eaeaea; }
.scroll i { width: 9px; height: 22px; border-radius: 5px; background: #b4b4b4; }

/* Symbology */
.symtools { display: flex; align-items: center; justify-content: space-between; padding: 0 3px 0 4px; }
.symtools .views { border-bottom: 1px solid #c8c8c8; }
.symbology .section { margin: 8px 0 4px; }
.combo.wide { width: 100%; }
.form { display: grid; grid-template-columns: 90px 1fr; grid-auto-rows: 28px; align-items: center; margin-top: 4px; }
.ctl { display: flex; align-items: center; gap: 7px; }
.spin { display: flex; align-items: center; width: 85px; height: 24px; border: 1px solid #999; background: #fff; }
.spin input { flex: 1; min-width: 0; padding: 0 0 0 4px; border: 0; outline: 0; background: none; color: #1a1a1a; }
.spin span { display: grid; gap: 5px; padding-right: 4px; }
.template { display: flex; align-items: center; height: 40px; }
.red { width: 15px; height: 15px; margin: 0 22px 0 53px; border: 1px solid #222; border-radius: 50%; background: #e60000; }
.box { width: 30px; height: 20px; margin-left: 32px; border: 2px solid #000; }
.splitter { display: flex; flex: none; align-items: center; justify-content: center; gap: 1px; height: 9px; margin-top: 5px; border: solid #c8c8c8; border-width: 2px 0; }
.splitter i { width: 6px; height: 4px; border-radius: 2px; background: #c8c8c8; }
.subtabs { display: flex; align-items: flex-end; margin-top: 10px; }
.subtabs button { height: 20px; padding: 0 6px 0 5px; border: 1px solid #c0c0c0; border-left: 0; border-bottom: 0; border-radius: 0 3px 0 0; background: #e2e3e4; color: #222; }
.subtabs .on { height: 22px; padding: 0 8px; border-left: 1px solid #c0c0c0; border-radius: 3px 3px 0 0; background: #eeeff1; }
.classes { flex: 1; padding: 0 8px 0 7px; border: 1px solid #c0c0c0; border-bottom: 0; background: #eeeff1; }
.classbar { display: flex; align-items: center; justify-content: flex-end; gap: 8px; height: 34px; color: #222; }
.classbar button { gap: 5px; padding: 0 2px 0 5px; }
.breaks { width: 100%; border-collapse: collapse; table-layout: fixed; }
.b1 { width: 80px; }
.b2 { width: 100px; }
.breaks th, .breaks td { padding: 0 3px; border: 1px solid #c8c8c8; text-align: left; white-space: nowrap; background: #fff; }
.breaks th { height: 22px; padding: 0 6px; background: #dedede; color: #333; font-weight: 400; }
.breaks tbody td:nth-child(2) { padding-left: 9px; }
.breaks td span { display: inline-block; width: 16px; }
.breaks .dot { margin: 0 auto; }
.breaks .h1 { height: 27px; }
.breaks .h2 { height: 35px; }
.breaks .h3 { height: 47px; }
.breaks .h4 { height: 59px; }
.breaks .h5 { height: 75px; }
.breaks tr:nth-child(even) td { background: #eaeaea; }
.breaks .out { height: 27px; }
.breaks tbody .out td { background: #c7e2f5; border-color: #9fcfec; }
.pick { display: flex; align-items: center; justify-content: space-between; padding: 0 3px 0 17px; }
```
